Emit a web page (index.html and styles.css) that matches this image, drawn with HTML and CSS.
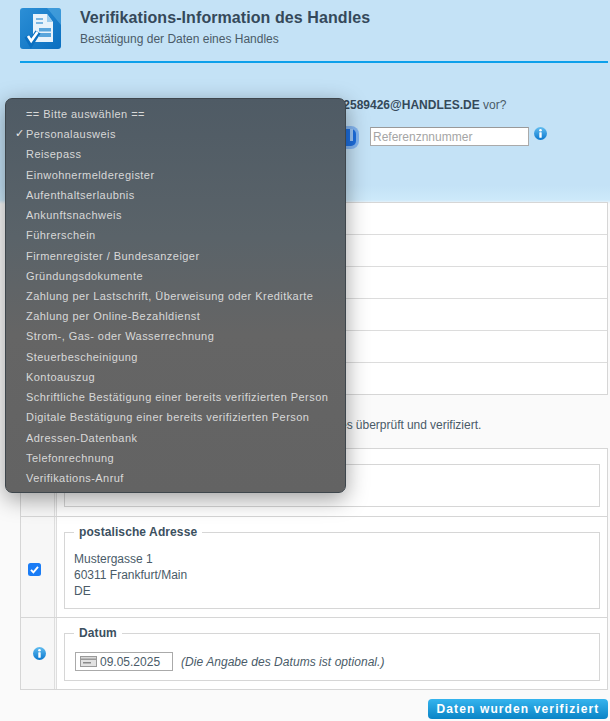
FILE: index.html
```html
<!DOCTYPE html>
<html lang="de">
<head>
    <meta charset="UTF-8">
    <title>Verifikations-Information des Handles</title>
    <link rel="stylesheet" href="styles.css">
</head>
<body>

    <svg class="icon-defs" width="0" height="0">
        <defs>
            <linearGradient id="infoFill" x1="0" y1="0" x2="0" y2="1">
                <stop offset="0" stop-color="#62bdf0"/>
                <stop offset="1" stop-color="#0a78cf"/>
            </linearGradient>
            <symbol id="info" viewBox="0 0 13 13">
                <circle cx="6.5" cy="6.5" r="6.5" fill="url(#infoFill)"/>
                <circle cx="6.5" cy="3.2" r="1.3" fill="#fff"/>
                <rect x="5.3" y="5.2" width="2.4" height="5.6" rx=".5" fill="#fff"/>
            </symbol>
        </defs>
    </svg>

    <div class="page">
        <div class="header">
            <svg class="logo" viewBox="0 0 41 41">
                <defs>
                    <linearGradient id="logoFill" x1="0" y1="0" x2="1" y2="1">
                        <stop offset="0" stop-color="#2c8fd6"/>
                        <stop offset="1" stop-color="#0a6fc0"/>
                    </linearGradient>
                </defs>
                <rect width="41" height="41" rx="3" fill="url(#logoFill)"/>
                <path d="M27 0h11a3 3 0 0 1 3 3v14z" fill="#5aaee6" opacity=".55"/>
                <path d="M13 6h14l6 8v20H13z" fill="#e8f3fb"/>
                <path d="M27 6v8h6z" fill="#9ccdee"/>
                <rect x="16" y="10" width="7" height="2" fill="#7ab6e2"/>
                <rect x="16" y="14" width="7" height="2" fill="#7ab6e2"/>
                <rect x="19" y="20" width="12" height="9" fill="#5aa6dc"/>
                <rect x="19" y="23.5" width="12" height="1.5" fill="#e8f3fb"/>
                <path d="M7 28l4 7 7-11" fill="none" stroke="#0a6fc0" stroke-width="6"/>
                <path d="M8 28l3.2 5L17.5 24" fill="none" stroke="#fff" stroke-width="2.6"/>
            </svg>
            <div class="header-text">
                <h1>Verifikations-Information des Handles</h1>
                <p>Bestätigung der Daten eines Handles</p>
            </div>
        </div>

        <p class="question">Welche Art der Verifikation liegt Ihnen bei dem Handle <b>MDE12589426@HANDLES.DE</b> vor?</p>

        <div class="ref-row">
            <div class="fake-select"><span class="select-arrow"></span></div>
            <input class="ref-input" type="text" placeholder="Referenznnummer">
            <svg class="info-icon"><use href="#info"/></svg>
        </div>

        <div class="info-table">
            <div class="info-row"></div>
            <div class="info-row"></div>
            <div class="info-row"></div>
            <div class="info-row"></div>
            <div class="info-row"></div>
            <div class="info-row"></div>
        </div>

        <p class="note">Die folgenden Daten wurden anhand eines Personalausweises überprüft und verifiziert.</p>

        <div class="check-table">
            <div class="check-row row-name">
                <div class="check-cell"></div>
                <div class="data-cell">
                    <fieldset>
                        <legend>Name</legend>
                        <div class="data-text name-text">Max Mustermann</div>
                    </fieldset>
                </div>
            </div>
            <div class="check-row">
                <div class="check-cell">
                    <svg class="checkbox" viewBox="0 0 13 13">
                        <rect width="13" height="13" rx="2.5" fill="#1a7cf5"/>
                        <path d="M3 6.8l2.4 2.6L10 3.8" fill="none" stroke="#fff" stroke-width="1.9"/>
                    </svg>
                </div>
                <div class="data-cell">
                    <fieldset>
                        <legend>postalische Adresse</legend>
                        <div class="data-text">Mustergasse 1<br>60311 Frankfurt/Main<br>DE</div>
                    </fieldset>
                </div>
            </div>
            <div class="check-row">
                <div class="check-cell">
                    <svg class="info-icon"><use href="#info"/></svg>
                </div>
                <div class="data-cell">
                    <fieldset>
                        <legend>Datum</legend>
                        <div class="date-line">
                            <div class="date-box">
                                <svg class="cal-icon" viewBox="0 0 17 11">
                                    <rect width="17" height="11" fill="#9a9a9a"/>
                                    <rect x="1" y="1" width="15" height="1.5" fill="#d8d8d8"/>
                                    <rect x="1" y="4" width="15" height="6" fill="#e2e2e2"/>
                                    <rect x="3" y="6" width="8" height="1.5" fill="#8a8a8a"/>
                                </svg>
                                <span>09.05.2025</span>
                            </div>
                            <em>(Die Angabe des Datums ist optional.)</em>
                        </div>
                    </fieldset>
                </div>
            </div>
        </div>

        <div class="actions">
            <button class="submit-button">Daten wurden verifiziert</button>
        </div>
    </div>

    <!-- offene Auswahlliste, liegt ueber dem Formular -->
    <div class="dropdown">
        <div class="option">== Bitte auswählen ==</div>
        <div class="option selected">Personalausweis</div>
        <div class="option">Reisepass</div>
        <div class="option">Einwohnermelderegister</div>
        <div class="option">Aufenthaltserlaubnis</div>
        <div class="option">Ankunftsnachweis</div>
        <div class="option">Führerschein</div>
        <div class="option">Firmenregister / Bundesanzeiger</div>
        <div class="option">Gründungsdokumente</div>
        <div class="option">Zahlung per Lastschrift, Überweisung oder Kreditkarte</div>
        <div class="option">Zahlung per Online-Bezahldienst</div>
        <div class="option">Strom-, Gas- oder Wasserrechnung</div>
        <div class="option">Steuerbescheinigung</div>
        <div class="option">Kontoauszug</div>
        <div class="option">Schriftliche Bestätigung einer bereits verifizierten Person</div>
        <div class="option">Digitale Bestätigung einer bereits verifizierten Person</div>
        <div class="option">Adressen-Datenbank</div>
        <div class="option">Telefonrechnung</div>
        <div class="option">Verifikations-Anruf</div>
    </div>

</body>
</html>
```

FILE: styles.css
```css
html, body {
    margin: 0;
    padding: 0;
    height: 721px;
    overflow: hidden;
}
body {
    font-family: "Liberation Sans", Arial, sans-serif;
    font-size: 12px;
    color: #4a5b68;
    background: linear-gradient(to bottom, #c4e2f6 0, #c4e2f6 186px, #cde9fa 200px, #fafafa 204px, #fafafa 100%);
}
.icon-defs {
    position: absolute;
}
.page {
    padding: 8px 1px 0 20px;
}
.header {
    display: flex;
    align-items: flex-start;
    gap: 19px;
    height: 53px;
    border-bottom: 2px solid #0ea0ea;
    margin-right: 1px;
}
.logo {
    width: 41px;
    height: 41px;
    flex: none;
}
.header-text h1 {
    margin: 0;
    padding-top: 1px;
    font-size: 16px;
    line-height: 18px;
    letter-spacing: .08px;
    color: #35495a;
}
.header-text p {
    margin: 5px 0 0;
    line-height: 14px;
    color: #4a5b68;
}
.question {
    margin: 35px 0 0;
    line-height: 14px;
    color: #4a5b68;
}
.question b {
    color: #35495a;
}
.ref-row {
    display: flex;
    align-items: flex-start;
    margin-top: 15px;
    padding-left: 203px;
    height: 75px;
}
.fake-select {
    width: 133px;
    height: 17px;
    margin: 2px 0 0;
    background: #1d6fe0;
    border-radius: 5px;
    box-shadow: 0 0 0 3px #84b6f2;
}
.select-arrow {
    display: block;
    margin-left: 127px;
    padding-top: 5px;
    width: 3px;
    height: 7px;
    background: #9cc6f6;
}
.ref-input {
    box-sizing: border-box;
    width: 159px;
    height: 19px;
    margin: 0 0 0 14px;
    padding: 0 2px;
    border: 1px solid #aaa;
    border-top-color: #999;
    background: #fff;
    font: 12px "Liberation Sans", Arial, sans-serif;
    color: #444;
    outline: none;
}
.ref-input::placeholder {
    color: #a5a5a5;
}
.info-icon {
    width: 13px;
    height: 13px;
    flex: none;
}
.ref-row .info-icon {
    margin-left: 5px;
}
.check-cell .info-icon {
    margin-left: 4px;
}
.info-table {
    border: 1px solid #d6d6d6;
    background: #fff;
    margin-right: 1px;
}
.info-row {
    height: 31px;
    border-bottom: 1px solid #dcdcdc;
}
.info-row:last-child {
    border-bottom: none;
}
.note {
    margin: 23px 0 0;
    line-height: 14px;
    word-spacing: -.25px;
}
.check-table {
    margin-top: 16px;
    margin-right: 1px;
    border: 1px solid #d6d6d6;
    background: #fff;
}
.check-row {
    display: flex;
    border-bottom: 1px solid #d6d6d6;
}
.check-row:last-child {
    border-bottom: none;
}
.row-name {
    height: 67px;
    overflow: hidden;
}
.check-cell {
    width: 33px;
    flex: none;
    display: flex;
    align-items: center;
    justify-content: center;
    background: #f7f7f7;
    border-right: 3px double #dedede;
}
.checkbox {
    width: 13px;
    height: 13px;
    margin: 4px 6px 0 0;
}
.data-cell {
    flex: 1;
    padding: 8px 7px 8px 7px;
}
fieldset {
    margin: 0;
    padding: 3px 9px 9px;
    border: 1px solid #d6d6d6;
}
legend {
    margin-left: 0;
    padding: 0 5px;
    font-weight: bold;
    line-height: 14px;
    letter-spacing: .1px;
    color: #3c5060;
}
.data-text {
    line-height: 16px;
    padding-top: 9px;
}
.name-text {
    padding-top: 7px;
}
.date-line {
    display: flex;
    align-items: center;
    gap: 8px;
    padding: 9px 0 0 1px;
}
.date-box {
    box-sizing: border-box;
    width: 98px;
    height: 19px;
    display: flex;
    align-items: center;
    gap: 3px;
    padding-left: 4px;
    border: 1px solid #aaa;
    background: #fff;
}
.cal-icon {
    width: 17px;
    height: 11px;
}
.date-line em {
    letter-spacing: .05px;
}
.actions {
    display: flex;
    justify-content: flex-end;
    margin-top: 9px;
    margin-right: 1px;
}
.submit-button {
    width: 180px;
    height: 20px;
    padding: 0;
    border: none;
    border-radius: 4px;
    background: linear-gradient(to bottom, #35b4ee, #0a84c6);
    color: #fff;
    font: bold 12px "Liberation Sans", Arial, sans-serif;
    letter-spacing: 1.12px;
    cursor: pointer;
}
.dropdown {
    position: absolute;
    left: 5px;
    top: 98px;
    box-sizing: border-box;
    width: 341px;
    height: 395px;
    padding: 5px 0 0 20px;
    border: 1px solid #3e464c;
    border-radius: 7px;
    background: linear-gradient(to bottom, #4f5b65 0, #5a6369 35%, #656565 60%, #636363 100%);
    box-shadow: 0 6px 22px rgba(0, 0, 0, .38);
    color: #d8d8d8;
    font-size: 11px;
    letter-spacing: .45px;
}
.option {
    height: 20.22px;
    line-height: 20px;
    white-space: nowrap;
    position: relative;
}
.selected::before {
    content: "✓";
    position: absolute;
    left: -11px;
    font-family: "DejaVu Sans", sans-serif;
    font-size: 11px;
    letter-spacing: 0;
    color: #e8e8e8;
}
```
